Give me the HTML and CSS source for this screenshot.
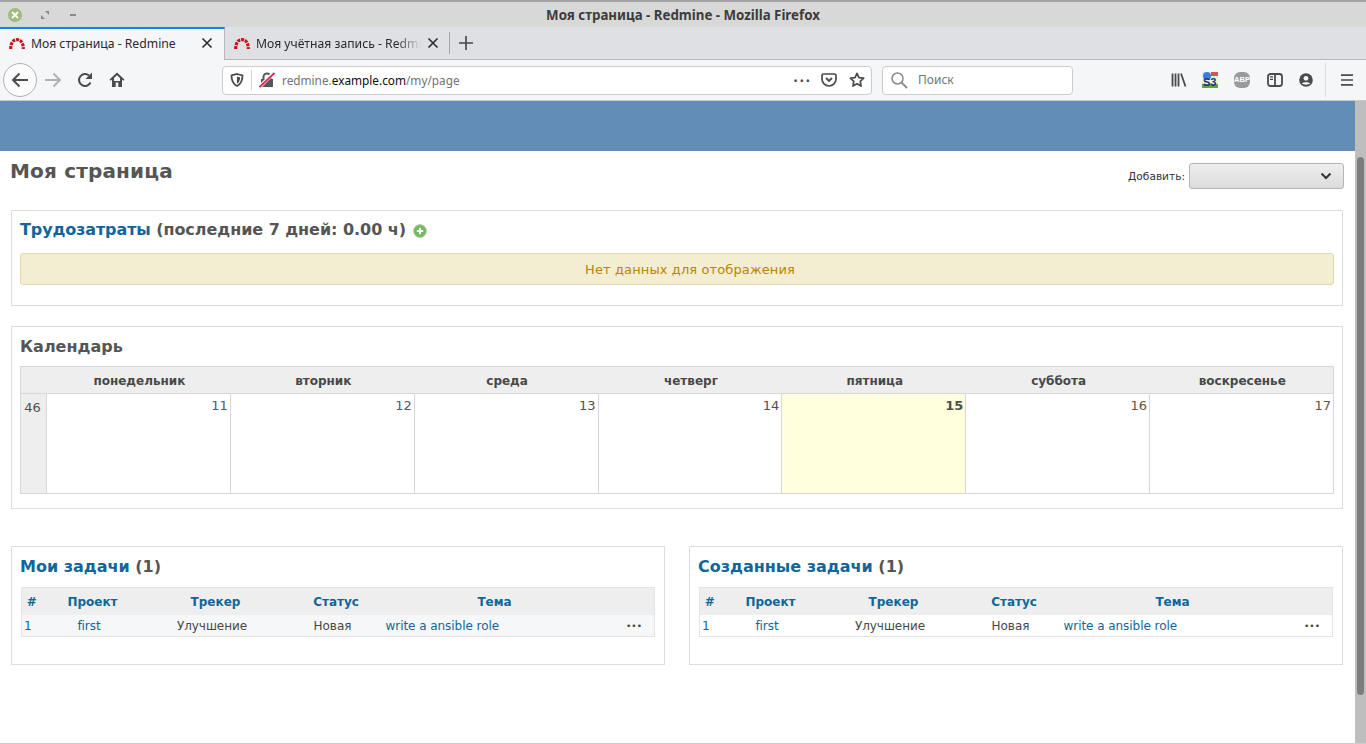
FILE: index.html
```html
<!DOCTYPE html>
<html>
  <head>
    <title>Моя страница - Redmine</title>
    <link rel="stylesheet" href="styles.css">
  </head>
  <body>
    <div class="titlebar">
      <div class="win-buttons">
        <span class="win-close"><svg width="10" height="10" viewBox="0 0 10 10"><path d="M2 2l6 6M8 2l-6 6" stroke="#fff" stroke-width="1.800"/></svg></span>
        <svg class="win-max" width="8" height="8" viewBox="0 0 8 8"><path d="M4 0h4v4zM0 4l4 4H0z" fill="#8a8a8a"/></svg>
        <span class="win-min"></span>
      </div>
      <div class="win-title">Моя страница - Redmine - Mozilla Firefox</div>
    </div>

    <div class="tabbar">
      <div class="tab active">
        <svg class="favicon" width="16" height="11" viewBox="0 0 16 11"><path d="M1.700 11C1.700 5 4 1.700 8 1.700S14.300 5 14.300 11" fill="none" stroke="#c8141c" stroke-width="3.200" stroke-dasharray="3 .9"/></svg>
        <span class="tab-label">Моя страница - Redmine</span>
        <svg class="tab-x" width="12" height="12" viewBox="0 0 12 12"><path d="M1.500 1.500l9 9M10.500 1.500l-9 9" stroke="#2b2b2b" stroke-width="1.600"/></svg>
      </div>
      <div class="tab second">
        <svg class="favicon" width="16" height="11" viewBox="0 0 16 11"><path d="M1.700 11C1.700 5 4 1.700 8 1.700S14.300 5 14.300 11" fill="none" stroke="#c8141c" stroke-width="3.200" stroke-dasharray="3 .9"/></svg>
        <span class="tab-label fade">Моя учётная запись - Redmine</span>
        <svg class="tab-x" width="12" height="12" viewBox="0 0 12 12"><path d="M1.500 1.500l9 9M10.500 1.500l-9 9" stroke="#2b2b2b" stroke-width="1.600"/></svg>
      </div>
      <span class="tab-sep"></span>
      <svg class="tab-new" width="14" height="14" viewBox="0 0 14 14"><path d="M7 0v14M0 7h14" stroke="#444" stroke-width="1.600"/></svg>
    </div>

    <div class="navbar">
      <span class="back"><svg width="18" height="16" viewBox="0 0 18 16"><path d="M17 8H2M8.500 1.500L2 8l6.500 6.500" fill="none" stroke="#4a4a4f" stroke-width="1.900"/></svg></span>
      <svg class="nav-fwd" width="18" height="16" viewBox="0 0 18 16"><path d="M1 8h15M9.500 1.500L16 8l-6.500 6.500" fill="none" stroke="#b1b1b3" stroke-width="1.900"/></svg>
      <svg class="nav-reload" width="16" height="16" viewBox="0 0 16 16"><path d="M13.500 10.500A6 6 0 1 1 12 3.500" fill="none" stroke="#4a4a4f" stroke-width="2"/><path d="M15 .5V7H8.500z" fill="#4a4a4f"/></svg>
      <svg class="nav-home" width="16" height="16" viewBox="0 0 16 16"><path d="M8 .5L.5 7.500 1.700 8.800 3 7.600V15h3.700v-4.500h2.600V15H13V7.600l1.300 1.200 1.200-1.300z" fill="#4a4a4f"/><path d="M8 3.200L5 6v7.200h0V9h6v4.200h0V6z" fill="#f5f6f7"/></svg>

      <div class="urlbar">
        <svg width="14" height="14" viewBox="0 0 14 14"><path d="M7 1l5.500 1.500C12.500 8 11 11 7 13 3 11 1.500 8 1.500 2.500z" fill="none" stroke="#4a4a4f" stroke-width="1.800"/><path d="M7 3.500l3.200.9C10 7.500 9 9.500 7 10.700z" fill="#4a4a4f"/></svg>
        <span class="url-sep"></span>
        <svg width="16" height="16" viewBox="0 0 16 16"><path d="M2 7h12v8H2z" fill="#58585c"/><path d="M4.500 7V5a3.500 3.500 0 0 1 7 0v2" fill="none" stroke="#58585c" stroke-width="2"/><path d="M0 15.500L15.500 0" stroke="#fff" stroke-width="3.500"/><path d="M.5 15L15.500 1" stroke="#e22850" stroke-width="1.900"/></svg>
        <span class="url-text">redmine.<b>example.com</b>/my/page</span>
        <span class="url-dots">•••</span>
        <svg width="16" height="16" viewBox="0 0 16 16"><path d="M2.500 2h11A1.500 1.500 0 0 1 15 3.500V7a7 7 0 0 1-14 0V3.500A1.500 1.500 0 0 1 2.500 2z" fill="none" stroke="#4a4a4f" stroke-width="1.700"/><path d="M5 6l3 3 3-3" fill="none" stroke="#4a4a4f" stroke-width="1.900"/></svg>
        <svg width="16" height="16" viewBox="0 0 16 16"><path d="M8 1.300l2 4.300 4.700.6-3.500 3.200.9 4.700L8 11.800l-4.100 2.300.9-4.700L1.300 6.200 6 5.600z" fill="none" stroke="#4a4a4f" stroke-width="1.700" stroke-linejoin="round"/></svg>
      </div>

      <div class="searchbar">
        <svg width="18" height="18" viewBox="0 0 18 18"><circle cx="7.500" cy="7.500" r="5.500" fill="none" stroke="#8a8a8e" stroke-width="1.500"/><path d="M11.500 11.500l5.500 5.500" stroke="#8a8a8e" stroke-width="1.800"/></svg>
        <span class="search-label">Поиск</span>
      </div>

      <div class="nav-tools">
        <svg width="16" height="16" viewBox="0 0 16 16"><path d="M1.500 1.500v13M4.500 1.500v13M7.500 1.500v13M10 1.500l4.500 13" fill="none" stroke="#4a4a4f" stroke-width="1.800"/></svg>
        <span class="s3-icon"><span class="s3-blue"></span><span class="s3-red"></span><span class="s3-text">S3</span></span>
        <span class="abp-icon">ABP</span>
        <svg class="tool-side" width="16" height="14" viewBox="0 0 16 14"><rect x="1" y="1" width="14" height="12" rx="2.500" fill="none" stroke="#4a4a4f" stroke-width="1.800"/><path d="M8 1v12" stroke="#4a4a4f" stroke-width="1.800"/><path d="M3 3.800h3M3 6.300h3" stroke="#4a4a4f" stroke-width="1.300"/></svg>
        <svg width="14" height="14" viewBox="0 0 14 14"><circle cx="7" cy="7" r="6.800" fill="#4a4a4f"/><circle cx="7" cy="5.300" r="2.400" fill="#f5f6f7"/><path d="M2.800 10.500C4 8.800 10 8.800 11.200 10.500 9 12 5 12 2.800 10.500z" fill="#f5f6f7"/></svg>
        <span class="tool-sep"></span>
        <svg width="12" height="12" viewBox="0 0 12 12"><path d="M0 1.200h12M0 6h12M0 10.800h12" stroke="#4a4a4f" stroke-width="1.700"/></svg>
      </div>
    </div>

    <div class="viewport">
      <div class="page">
        <div class="page-top"></div>
        <div class="content">
          <div class="heading-row">
            <h1>Моя страница</h1>
            <div class="add-block">
              <label>Добавить:</label>
              <span class="fake-select"><svg width="12" height="8" viewBox="0 0 12 8"><path d="M1.500 1.500L6 6l4.500-4.500" fill="none" stroke="#333" stroke-width="2"/></svg></span>
            </div>
          </div>

          <div class="box box-time">
            <h3><a href="#">Трудозатраты</a> (последние 7 дней: 0.00 ч)
              <svg class="add-icon" width="14" height="14" viewBox="0 0 14 14"><circle cx="7" cy="7" r="6.300" fill="#76b866" stroke="#9cc690"/><path d="M7 3.800v6.400M3.800 7h6.400" stroke="#f4fbf2" stroke-width="2"/></svg>
            </h3>
            <p class="nodata">Нет данных для отображения</p>
          </div>

          <div class="box box-cal">
            <h3>Календарь</h3>
            <table class="cal">
              <thead>
                <tr>
                  <th class="week-head"></th>
                  <th>понедельник</th><th>вторник</th><th>среда</th><th>четверг</th><th>пятница</th><th>суббота</th><th>воскресенье</th>
                </tr>
              </thead>
              <tbody>
                <tr>
                  <td class="week">46</td>
                  <td class="blue">11</td><td class="blue">12</td><td>13</td><td>14</td>
                  <td class="today">15</td><td class="brown">16</td><td class="brown">17</td>
                </tr>
              </tbody>
            </table>
          </div>

          <div class="columns">
            <div class="box box-issues">
              <h3><a href="#">Мои задачи</a> (1)</h3>
              <table class="issues">
                <thead>
                  <tr><th class="c-id">#</th><th class="c-proj">Проект</th><th class="c-track">Трекер</th><th class="c-status">Статус</th><th class="c-subj">Тема</th><th class="c-act"></th></tr>
                </thead>
                <tbody>
                  <tr class="odd"><td class="link num">1</td><td class="link mid">first</td><td class="mid">Улучшение</td><td class="mid">Новая</td><td class="link subj">write a ansible role</td><td class="dots">•••</td></tr>
                </tbody>
              </table>
            </div>
            <div class="box box-issues">
              <h3><a href="#">Созданные задачи</a> (1)</h3>
              <table class="issues">
                <thead>
                  <tr><th class="c-id">#</th><th class="c-proj">Проект</th><th class="c-track">Трекер</th><th class="c-status">Статус</th><th class="c-subj">Тема</th><th class="c-act"></th></tr>
                </thead>
                <tbody>
                  <tr><td class="link num">1</td><td class="link mid">first</td><td class="mid">Улучшение</td><td class="mid">Новая</td><td class="link subj">write a ansible role</td><td class="dots">•••</td></tr>
                </tbody>
              </table>
            </div>
          </div>
        </div>
      </div>
      <div class="scrollbar"><span class="thumb"></span></div>
    </div>
  </body>
</html>
```

FILE: styles.css
```css
*,
*:before,
*:after {
  box-sizing: border-box;
}
html,
body {
  height: 744px;
  margin: 0;
  padding: 0;
  overflow: hidden;
  background: #fff;
  font-family: "Noto Sans", sans-serif;
}
body {
  display: flex;
  flex-direction: column;
  border-bottom: 1px solid #ccc;
}

/* window title */
.titlebar {
  position: relative;
  height: 27px;
  flex: none;
  display: flex;
  align-items: center;
  background: #d8d8d8;
  border-top: 2px solid #a3a3a3;
}
.win-buttons {
  display: flex;
  align-items: center;
  margin-left: 8px;
}
.win-close {
  width: 14px;
  height: 14px;
  border-radius: 50%;
  background: #9dbd78;
  display: flex;
  align-items: center;
  justify-content: center;
}
.win-max {
  margin-left: 19px;
}
.win-min {
  width: 6px;
  height: 2px;
  background: #8a8a8a;
  margin-left: 21px;
}
.win-title {
  position: absolute;
  left: 0;
  right: 0;
  text-align: center;
  font-size: 13.3px;
  font-weight: bold;
  color: #3c3c3c;
}

/* tabs */
.tabbar {
  height: 33px;
  flex: none;
  display: flex;
  align-items: center;
  background: #dfe0e3;
  border-bottom: 1px solid #b8b8ba;
}
.tab {
  width: 225px;
  height: 33px;
  display: flex;
  align-items: center;
  padding: 0 11px 0 9px;
  font-size: 12.2px;
  color: #2a2a2e;
}
.tab.second {
  width: 224px;
  padding-right: 10px;
}
.tab.active {
  background: #f5f6f7;
  border-top: 2px solid #0a84ff;
  border-right: 1px solid #b8b8ba;
  height: 34px;
  padding-bottom: 4px;
  align-self: flex-start;
}
.favicon {
  flex: none;
  margin-right: 6px;
}
.tab-label {
  flex: 1;
  overflow: hidden;
  white-space: nowrap;
}
.tab-label.fade {
  -webkit-mask-image: linear-gradient(to right, #000 85%, transparent);
  mask-image: linear-gradient(to right, #000 85%, transparent);
}
.tab-x {
  flex: none;
  margin-left: 6px;
}
.tab-sep {
  width: 1px;
  height: 22px;
  background: #a8a8aa;
}
.tab-new {
  margin-left: 9px;
}

/* toolbar */
.navbar {
  height: 41px;
  flex: none;
  display: flex;
  align-items: center;
  background: #f5f6f7;
  border-bottom: 1px solid #c8c8ca;
  padding-left: 3px;
}
.back {
  width: 34px;
  height: 34px;
  border: 1px solid #b1b1b3;
  border-radius: 50%;
  background: #fbfbfb;
  display: flex;
  align-items: center;
  justify-content: center;
}
.nav-fwd {
  margin-left: 7px;
}
.nav-reload {
  margin-left: 15px;
}
.nav-home {
  margin-left: 16px;
}
.urlbar {
  width: 650px;
  height: 29px;
  margin-left: 97px;
  display: flex;
  align-items: center;
  background: #fff;
  border: 1px solid #ccc;
  border-radius: 4px;
  padding: 0 6px 0 7px;
}
.url-sep {
  width: 1px;
  height: 20px;
  background: #d4d4d6;
  margin: 0 7px;
}
.url-text {
  flex: 1;
  margin-left: 7px;
  font-size: 11.8px;
  color: #737373;
}
.url-text b {
  font-weight: normal;
  color: #0c0c0d;
}
.url-dots {
  font-size: 11px;
  letter-spacing: 2px;
  color: #4a4a4f;
  margin-right: 9px;
}
.urlbar svg:last-child {
  margin-left: 12px;
}
.searchbar {
  width: 191px;
  height: 29px;
  margin-left: 10px;
  display: flex;
  align-items: center;
  gap: 10px;
  background: #fff;
  border: 1px solid #ccc;
  border-radius: 4px;
  padding-left: 7px;
  font-size: 12px;
  color: #737373;
}
.search-label {
  margin-bottom: 1px;
}
.nav-tools {
  display: flex;
  align-items: center;
  margin-left: 98px;
  gap: 16px;
}
.s3-icon {
  position: relative;
  width: 16px;
  height: 16px;
  margin-left: -1px;
  background: linear-gradient(#dfeaf5 0 35%, #f4f3c8 35% 75%, #5aa83c 75%);
  display: block;
}
.s3-blue {
  position: absolute;
  left: 1px;
  top: 0;
  width: 8px;
  height: 8px;
  border-radius: 50%;
  background: #3b7fd9;
}
.s3-red {
  position: absolute;
  right: 0;
  top: 0;
  width: 7px;
  height: 4px;
  background: #d9534a;
}
.s3-text {
  position: absolute;
  left: 1px;
  bottom: 0;
  font: bold 11px/11px "Liberation Sans", sans-serif;
  color: #12308a;
}
.abp-icon {
  width: 16px;
  height: 16px;
  border-radius: 6px;
  background: #9b9b9f;
  color: #fff;
  font: bold 7.5px/16px "Liberation Sans", sans-serif;
  text-align: center;
  overflow: hidden;
}
.tool-side {
  margin-left: 1px;
}
.tool-sep {
  width: 1px;
  height: 34px;
  background: #dcdcde;
  margin: 0 -1px 0 -4px;
}

/* page */
.viewport {
  flex: 1;
  min-height: 0;
  display: flex;
  font-family: "DejaVu Sans", sans-serif;
  color: #484848;
}
.page {
  flex: 1;
  min-width: 0;
}
.page-top {
  height: 50px;
  background: #628db6;
}
.scrollbar {
  width: 11px;
  flex: none;
  background: #bebebe;
  padding: 56px 2px 0;
}
.thumb {
  display: block;
  height: 538px;
  border-radius: 4px;
  background: #7d7d7d;
}
.content {
  padding: 0 12px 0 11px;
}
.heading-row {
  display: flex;
  justify-content: space-between;
  height: 59px;
}
h1 {
  margin: 8px 0 0 -1px;
  font-size: 20px;
  line-height: 24px;
  letter-spacing: .17px;
  color: #555;
}
.add-block {
  display: flex;
  align-items: center;
  height: 26px;
  margin-top: 12px;
  font-size: 10.6px;
  color: #333;
  gap: 4px;
}
.fake-select {
  width: 155px;
  height: 26px;
  margin-right: -1px;
  display: flex;
  align-items: center;
  justify-content: flex-end;
  padding-right: 11px;
  border: 1px solid #b5b5b5;
  border-radius: 3px;
  background: linear-gradient(#eeeeee, #dcdcdc);
}
.box {
  border: 1px solid #ddd;
  background: #fff;
  padding: 0 8px;
}
.box h3 {
  margin: 0;
  font-size: 16px;
  line-height: 20px;
  color: #555;
}
.box h3 a,
.issues th {
  color: #169;
  text-decoration: none;
}
.add-icon {
  vertical-align: -3px;
  margin-left: 2px;
}
.box-time {
  height: 96px;
  padding-top: 9px;
}
.box-time h3 {
  letter-spacing: -.05px;
}
.box-time h3 a {
  letter-spacing: -.12px;
}
.nodata {
  height: 32px;
  margin: 13px 0 0;
  padding-left: 26px;
  border: 1px solid #e4d8ae;
  border-radius: 3px;
  background: #f3edd1;
  color: #b88600;
  font-size: 13px;
  letter-spacing: .11px;
  line-height: 31px;
  text-align: center;
}
.box-cal {
  height: 183px;
  margin-top: 20px;
  padding-top: 10px;
}
.cal {
  width: 1314px;
  height: 128px;
  margin-top: 9px;
  border-collapse: collapse;
  table-layout: fixed;
  font-size: 13px;
}
.cal th {
  height: 27px;
  background: #eee;
  border: 1px solid #d7d7d7;
  border-width: 1px 0 1px 0;
  font-size: 12px;
  color: #484848;
  padding: 2px 0 0 2px;
}
.cal th:first-child {
  border-left: 1px solid #d7d7d7;
}
.cal th:last-child {
  border-right: 1px solid #d7d7d7;
}
.week-head {
  width: 26px;
}
.cal td {
  border: 1px solid #d7d7d7;
  vertical-align: top;
  text-align: right;
  padding: 4px 2px 0 0;
  color: #505050;
  height: 100px;
}
.cal td.week {
  background: #eee;
  text-align: center;
  padding: 6px 2px 0 0;
}
.cal td.blue {
  color: #505a6a;
}
.cal td.today {
  background: #ffffdd;
  font-weight: bold;
}
.cal td.brown {
  color: #6b5040;
}
.columns {
  display: grid;
  grid-template-columns: 654px 654px;
  gap: 24px;
  margin-top: 37px;
}
.box-issues {
  height: 119px;
  padding: 10px 9px 0 8px;
}
.issues {
  width: calc(100% - 1px);
  margin: 10px 0 0 1px;
  border-collapse: collapse;
  table-layout: fixed;
  border: 1px solid #e4e4e4;
  font-size: 12px;
}
.issues th {
  height: 27px;
  background: #eee;
  font-size: 12px;
  padding: 2px 0 0;
}
.issues th.c-id,
.issues th.c-status,
.issues th.c-proj,
.issues th.c-track {
  padding-right: 2px;
}
.issues td {
  height: 22px;
  padding: 2px 3px 0;
  white-space: nowrap;
  letter-spacing: -.05px;
  color: #484848;
}
.issues tr.odd td {
  background: #f6f7f8;
}
.issues td.link {
  color: #169;
}
.issues td.num {
  padding-left: 2px;
}
.issues td.subj {
  padding-left: 1px;
}
.issues td.mid {
  padding-right: 12px;
  text-align: center;
}
.issues td.dots {
  padding-right: 12px;
  text-align: right;
  font-size: 9px;
  letter-spacing: 0;
  color: #444;
}
.c-id {
  width: 22px;
}
.c-proj {
  width: 100px;
}
.c-track {
  width: 146px;
}
.c-status {
  width: 95px;
}
.c-act {
  width: 50px;
}
```
